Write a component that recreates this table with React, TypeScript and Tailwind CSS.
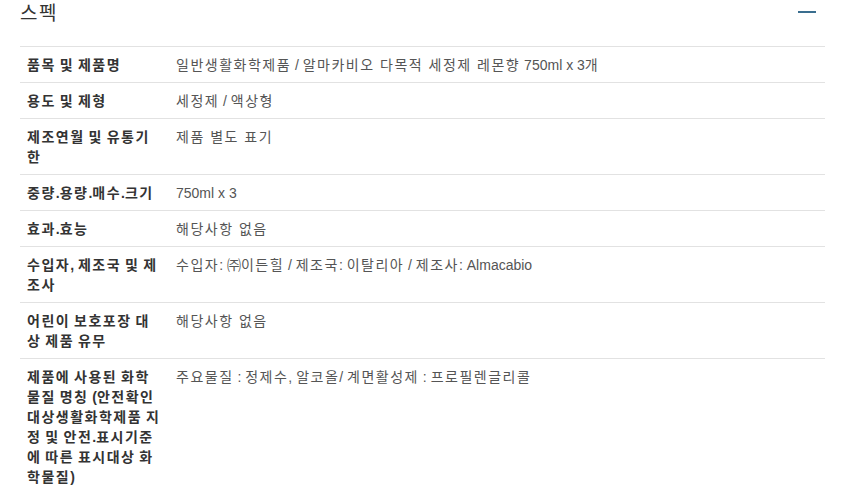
import React from "react";

const rows: [string, string][] = [
  ["품목 및 제품명", "일반생활화학제품 / 알마카비오 다목적 세정제 레몬향 750ml x 3개"],
  ["용도 및 제형", "세정제 / 액상형"],
  ["제조연월 및 유통기한", "제품 별도 표기"],
  ["중량.용량.매수.크기", "750ml x 3"],
  ["효과.효능", "해당사항 없음"],
  ["수입자, 제조국 및 제조사", "수입자: ㈜이든힐 / 제조국: 이탈리아 / 제조사: Almacabio"],
  ["어린이 보호포장 대상 제품 유무", "해당사항 없음"],
  [
    "제품에 사용된 화학물질 명칭 (안전확인대상생활화학제품 지정 및 안전.표시기준에 따른 표시대상 화학물질)",
    "주요물질 : 정제수, 알코올/ 계면활성제 : 프로필렌글리콜",
  ],
];

const HANGUL_RUN = /([\uAC00-\uD7A3]+(?: +[\uAC00-\uD7A3]+)*)/;
const HANGUL_ONLY = /([\uAC00-\uD7A3]+)/;

function Wide({ text, bold }: { text: string; bold?: boolean }) {
  const parts = text.split(bold ? HANGUL_ONLY : HANGUL_RUN);
  return (
    <>
      {parts.map((p, i) =>
        i % 2 === 1 ? (
          <span key={i} className={bold ? "tracking-[1.5px]" : "tracking-[1.5px]"}>
            {p}
          </span>
        ) : (
          <span key={i}>{p}</span>
        )
      )}
    </>
  );
}

export default function App() {
  return (
    <div
      className="bg-white w-[858px] min-h-[494px] pl-5 pr-[33px]"
      style={{ fontFamily: '"Liberation Sans", "Noto Sans CJK KR", sans-serif' }}
    >
      <div className="flex items-center justify-between h-[26px] pt-[1px]">
        <h2 className="text-[19px] leading-[24px] text-[#333] font-normal tracking-[1.4px]">스펙</h2>
        <div className="w-[18px] h-[2px] bg-[#3a6e8f] mr-[9px] mt-[-4px]" />
      </div>
      <div className="mt-[20px] border-t border-[#e2e2e2]">
        {rows.map(([k, v], i) => (
          <div key={i} className="flex border-b border-[#e2e2e2]">
            <div className="w-[149px] shrink-0 px-[7px] pt-[8px] pb-[7px] text-[14px] leading-[20px] font-bold text-[#333]">
              <Wide text={k} bold />
            </div>
            <div className="flex-1 px-[7px] pt-[8px] pb-[7px] text-[14px] leading-[20px] text-[#555]">
              <Wide text={v} />
            </div>
          </div>
        ))}
      </div>
    </div>
  );
}
